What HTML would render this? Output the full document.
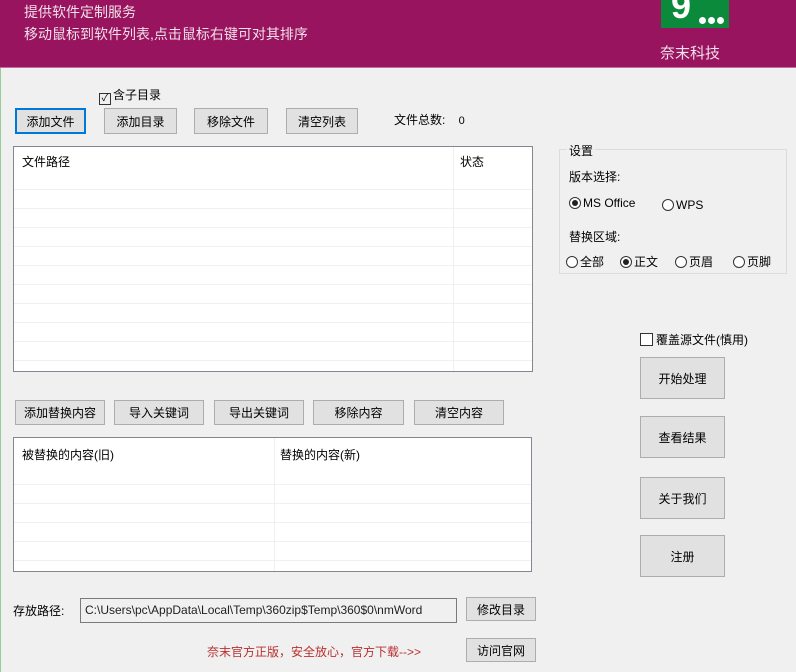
<!DOCTYPE html><html><head><meta charset="utf-8"><style>
*{box-sizing:border-box}body{margin:0;width:796px;height:672px;background:#f0f0f0;font-family:"Liberation Sans","Noto Sans CJK SC",sans-serif;font-size:12px;color:#000;position:relative;overflow:hidden}
.a{position:absolute}
.hd{left:0;top:0;width:796px;height:68px;background:#98145f;border-bottom:1px solid #c070a0}
.ht{color:#f2e0ea;font-size:14px}
.b{position:absolute;background:#e1e1e1;border:1px solid #adadad;text-align:center;font-size:12px;display:flex;align-items:center;justify-content:center}
.tb{position:absolute;background:#fff;border:1px solid #828790}
.row{position:absolute;left:0;right:0;height:1px;background:#f0f0f0}
.r{display:inline-block;width:12px;height:12px;border:1px solid #333;border-radius:50%;vertical-align:-2px;margin-right:2px;position:relative;background:#fff}
.r.on:after{content:"";position:absolute;left:2px;top:2px;width:6px;height:6px;border-radius:50%;background:#222}
</style></head><body>
<div class="a hd"></div>
<div class="a ht" style="left:24px;top:2px">提供软件定制服务</div>
<div class="a ht" style="left:24px;top:24px">移动鼠标到软件列表,点击鼠标右键可对其排序</div>
<div class="a" style="left:661px;top:0;width:68px;height:28px;background:#0a8a3a;overflow:hidden">
<div class="a" style="left:10px;top:-12px;color:#fff;font-weight:bold;font-size:36px;line-height:36px">9</div>
<div class="a" style="left:38px;top:17px;width:7px;height:7px;border-radius:50%;background:#fff"></div>
<div class="a" style="left:47px;top:17px;width:7px;height:7px;border-radius:50%;background:#fff"></div>
<div class="a" style="left:56px;top:17px;width:7px;height:7px;border-radius:50%;background:#fff"></div>
</div>
<div class="a ht" style="left:660px;top:42px;font-size:15px">奈末科技</div>
<div class="a" style="left:0;top:68px;width:1px;height:604px;background:#9c9"></div>
<div class="a" style="left:99px;top:86px"><span style="display:inline-block;width:12px;height:12px;border:1px solid #333;font-size:10px;line-height:10px;text-align:center;vertical-align:-2px;margin-right:2px">✓</span>含子目录</div>
<div class="b" style="left:15px;top:108px;width:71px;height:26px;border:2px solid #0078d7">添加文件</div>
<div class="b" style="left:104px;top:108px;width:73px;height:26px">添加目录</div>
<div class="b" style="left:194px;top:108px;width:74px;height:26px">移除文件</div>
<div class="b" style="left:286px;top:108px;width:72px;height:26px">清空列表</div>
<div class="a" style="left:394px;top:111px">文件总数:&nbsp;&nbsp;&nbsp;&nbsp;<span style="font-size:11px">0</span></div>
<div class="tb" style="left:13px;top:146px;width:520px;height:226px">
<div class="a" style="left:8px;top:6px">文件路径</div><div class="a" style="left:446px;top:6px">状态</div>
<div class="a" style="left:439px;top:0;width:1px;height:224px;background:#f0f0f0"></div>
<div class="row" style="top:42px"></div><div class="row" style="top:61px"></div><div class="row" style="top:80px"></div><div class="row" style="top:99px"></div><div class="row" style="top:118px"></div><div class="row" style="top:137px"></div><div class="row" style="top:156px"></div><div class="row" style="top:175px"></div><div class="row" style="top:194px"></div><div class="row" style="top:213px"></div>
</div>
<div class="b" style="left:15px;top:400px;width:90px;height:25px">添加替换内容</div>
<div class="b" style="left:114px;top:400px;width:90px;height:25px">导入关键词</div>
<div class="b" style="left:214px;top:400px;width:90px;height:25px">导出关键词</div>
<div class="b" style="left:313px;top:400px;width:91px;height:25px">移除内容</div>
<div class="b" style="left:414px;top:400px;width:90px;height:25px">清空内容</div>
<div class="tb" style="left:13px;top:437px;width:519px;height:135px">
<div class="a" style="left:8px;top:8px">被替换的内容(旧)</div><div class="a" style="left:266px;top:8px">替换的内容(新)</div>
<div class="a" style="left:260px;top:0;width:1px;height:133px;background:#f0f0f0"></div>
<div class="row" style="top:46px"></div><div class="row" style="top:65px"></div><div class="row" style="top:84px"></div><div class="row" style="top:103px"></div><div class="row" style="top:122px"></div>
</div>
<div class="a" style="left:559px;top:149px;width:228px;height:125px;border:1px solid #dcdcdc"></div>
<div class="a" style="left:567px;top:142px;background:#f0f0f0;padding:0 2px">设置</div>
<div class="a" style="left:569px;top:168px">版本选择:</div>
<div class="a" style="left:569px;top:196px"><span class="r on"></span>MS Office</div>
<div class="a" style="left:662px;top:198px"><span class="r"></span>WPS</div>
<div class="a" style="left:569px;top:228px">替换区域:</div>
<div class="a" style="left:566px;top:253px"><span class="r"></span>全部</div>
<div class="a" style="left:620px;top:253px"><span class="r on"></span>正文</div>
<div class="a" style="left:675px;top:253px"><span class="r"></span>页眉</div>
<div class="a" style="left:733px;top:253px"><span class="r"></span>页脚</div>
<div class="a" style="left:640px;top:331px"><span style="display:inline-block;width:13px;height:13px;border:1px solid #333;background:#fff;vertical-align:-2px;margin-right:3px"></span>覆盖源文件(慎用)</div>
<div class="b" style="left:640px;top:357px;width:85px;height:42px">开始处理</div>
<div class="b" style="left:640px;top:416px;width:85px;height:42px">查看结果</div>
<div class="b" style="left:640px;top:477px;width:85px;height:42px">关于我们</div>
<div class="b" style="left:640px;top:535px;width:85px;height:42px">注册</div>
<div class="a" style="left:13px;top:602px">存放路径:</div>
<div class="a" style="left:80px;top:598px;width:377px;height:25px;border:1px solid #7a7a7a;background:#f0f0f0;padding:4px 4px;white-space:nowrap;overflow:hidden;color:#222">C:\Users\pc\AppData\Local\Temp\360zip$Temp\360$0\nmWord</div>
<div class="b" style="left:466px;top:597px;width:70px;height:24px">修改目录</div>
<div class="a" style="left:207px;top:643px;color:#b83030">奈末官方正版，安全放心，官方下载--&gt;&gt;</div>
<div class="b" style="left:466px;top:638px;width:70px;height:24px">访问官网</div>
</body></html>
